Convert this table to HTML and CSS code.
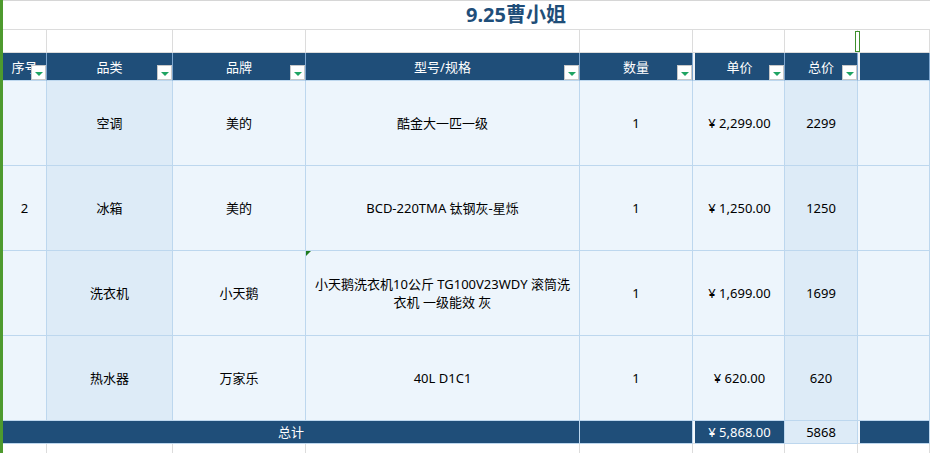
FILE: index.html
```html
<!DOCTYPE html>
<html lang="zh-CN">
<head>
<meta charset="utf-8">
<title>9.25曹小姐</title>
<link rel="stylesheet" href="styles.css">
</head>
<body>
<div class="sheet">
  <div class="title">9.25曹小姐</div>

  <div class="c w"></div><div class="c w"></div><div class="c w"></div><div class="c w"></div><div class="c w"></div>
  <div class="c w g"></div><div class="c w"></div><div class="c w"></div>
  <div class="c w g"><span class="sel"></span></div><div class="c w"></div>

  <div class="c h">序号<span class="f"></span></div>
  <div class="c h">品类<span class="f"></span></div>
  <div class="c h">品牌<span class="f"></span></div>
  <div class="c h">型号/规格<span class="f"></span></div>
  <div class="c h">数量<span class="f"></span></div>
  <div class="c hg"></div>
  <div class="c h">单价<span class="f"></span></div>
  <div class="c h">总价<span class="f"></span></div>
  <div class="c hg"></div>
  <div class="c h"></div>

  <div class="c d"></div><div class="c d alt">空调</div><div class="c d">美的</div><div class="c d">酷金大一匹一级</div><div class="c d">1</div>
  <div class="c d g"></div><div class="c d">¥ 2,299.00</div><div class="c d alt">2299</div><div class="c d g"></div><div class="c d"></div>

  <div class="c d">2</div><div class="c d alt">冰箱</div><div class="c d">美的</div><div class="c d">BCD-220TMA 钛钢灰-星烁</div><div class="c d">1</div>
  <div class="c d g"></div><div class="c d">¥ 1,250.00</div><div class="c d alt">1250</div><div class="c d g"></div><div class="c d"></div>

  <div class="c d"></div><div class="c d alt">洗衣机</div><div class="c d">小天鹅</div><div class="c d"><span class="mark"></span>小天鹅洗衣机10公斤 TG100V23WDY 滚筒洗<br>衣机 一级能效 灰</div><div class="c d">1</div>
  <div class="c d g"></div><div class="c d">¥ 1,699.00</div><div class="c d alt">1699</div><div class="c d g"></div><div class="c d"></div>

  <div class="c d"></div><div class="c d alt">热水器</div><div class="c d">万家乐</div><div class="c d">40L D1C1</div><div class="c d">1</div>
  <div class="c d g"></div><div class="c d">¥ 620.00</div><div class="c d alt">620</div><div class="c d g"></div><div class="c d"></div>

  <div class="c t span4">总计</div>
  <div class="c t"></div>
  <div class="c tg"></div>
  <div class="c t">¥ 5,868.00</div>
  <div class="c t tl">5868</div>
  <div class="c tg"></div>
  <div class="c t"></div>

  <div class="c b"></div><div class="c b"></div><div class="c b"></div><div class="c b"></div><div class="c b"></div>
  <div class="c b g"></div><div class="c b"></div><div class="c b"></div><div class="c b g"></div><div class="c b"></div>
</div>
</body>
</html>
```

FILE: styles.css
```css
* { box-sizing: border-box; }

html, body {
  margin: 0;
  padding: 0;
  background: #ffffff;
}

body {
  font-family: "Noto Sans", "Noto Sans CJK SC", sans-serif;
  font-size: 13px;
  color: #000000;
  overflow: hidden;
}

.sheet {
  display: grid;
  grid-template-columns: 44px 126px 133px 274px 113px 2px 90px 73px 2px 1fr;
  grid-template-rows: 30px 23px 28px repeat(4, 85px) 23px 1fr;
  width: 930px;
  height: 453px;
  border-left: 3px solid #4e9a2e;
}

.title {
  grid-column: 1 / -1;
  display: flex;
  align-items: center;
  padding-left: 463px;
  border-top: 1px solid #d6d6d6;
  border-bottom: 1px solid #dcdcdc;
  font-size: 20px;
  font-weight: 700;
  color: #1f4e79;
  line-height: 24px;
}

.c {
  position: relative;
  display: flex;
  align-items: center;
  justify-content: center;
  text-align: center;
  line-height: 18px;
  white-space: nowrap;
  border-right: 1px solid #bdd7ee;
  border-bottom: 1px solid #bdd7ee;
}

/* white spacer row */
.w {
  background: #ffffff;
  border-right-color: #dcdcdc;
  border-bottom-color: #dcdcdc;
}

/* header */
.h {
  background: #1f4e79;
  color: #ffffff;
  border-right-color: #7fa7cf;
  border-bottom-color: #bdd7ee;
}

.hg {
  background: #f0f3f7;
  border-right: none;
  border-bottom-color: #bdd7ee;
}

.f {
  position: absolute;
  right: 0;
  bottom: 0;
  width: 15px;
  height: 15px;
  background: #ffffff;
  border: 1px solid #c8c8c8;
  display: flex;
  align-items: center;
  justify-content: center;
}

.f::after {
  content: "";
  display: block;
  margin-top: 2px;
  border-left: 4px solid transparent;
  border-right: 4px solid transparent;
  border-top: 4px solid #1fa463;
}

/* data rows */
.d {
  background: #edf5fc;
}

.d.alt {
  background: #ddebf7;
}

.g {
  border-right: none;
}

.mark {
  position: absolute;
  top: 0;
  left: 0;
  width: 0;
  height: 0;
  border-top: 5px solid #1e7b1e;
  border-right: 5px solid transparent;
}

/* total row */
.t {
  background: #1f4e79;
  color: #ffffff;
  border-right-color: #bdd7ee;
  border-bottom-color: #bdd7ee;
}

.t.tl {
  background: #ddebf7;
  color: #000000;
}

.tg {
  background: #f4f8fc;
  border-right: none;
  border-bottom-color: #e0e0e0;
}

.span4 {
  grid-column: span 4;
}

/* bottom blank row */
.b {
  background: #ffffff;
  border-right-color: #dcdcdc;
  border-bottom: none;
}

.sel {
  position: absolute;
  left: -3px;
  top: 1px;
  width: 5px;
  height: 21px;
  border: 1px solid #3f8f2c;
  background: #ffffff;
}
```
